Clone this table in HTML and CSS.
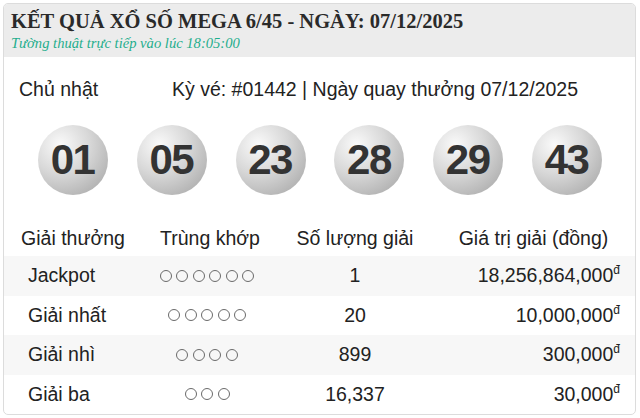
FILE: index.html
```html
<!DOCTYPE html>
<html lang="vi">
<head>
<meta charset="utf-8">
<link rel="stylesheet" href="styles.css">
</head>
<body>
<div class="card">
  <div class="head">
    <h1 class="title">KẾT QUẢ XỔ SỐ MEGA 6/45 - NGÀY: 07/12/2025</h1>
    <div class="live">Tường thuật trực tiếp vào lúc 18:05:00</div>
  </div>
  <div class="info">
    <span class="day">Chủ nhật</span>
    <span class="draw">Kỳ vé: #01442 | Ngày quay thưởng 07/12/2025</span>
  </div>
  <div class="balls">
    <span class="ball">01</span>
    <span class="ball">05</span>
    <span class="ball">23</span>
    <span class="ball">28</span>
    <span class="ball">29</span>
    <span class="ball">43</span>
  </div>
  <div class="prizes">
    <div class="row th">
      <div class="c1">Giải thưởng</div>
      <div class="c2">Trùng khớp</div>
      <div class="c3">Số lượng giải</div>
      <div class="c4">Giá trị giải (đồng)</div>
    </div>
    <div class="row alt">
      <div class="c1 name">Jackpot</div>
      <div class="c2 dots"><i></i><i></i><i></i><i></i><i></i><i></i></div>
      <div class="c3">1</div>
      <div class="c4 val">18,256,864,000<sup>đ</sup></div>
    </div>
    <div class="row">
      <div class="c1 name">Giải nhất</div>
      <div class="c2 dots"><i></i><i></i><i></i><i></i><i></i></div>
      <div class="c3">20</div>
      <div class="c4 val">10,000,000<sup>đ</sup></div>
    </div>
    <div class="row alt">
      <div class="c1 name">Giải nhì</div>
      <div class="c2 dots"><i></i><i></i><i></i><i></i></div>
      <div class="c3">899</div>
      <div class="c4 val">300,000<sup>đ</sup></div>
    </div>
    <div class="row">
      <div class="c1 name">Giải ba</div>
      <div class="c2 dots"><i></i><i></i><i></i></div>
      <div class="c3">16,337</div>
      <div class="c4 val">30,000<sup>đ</sup></div>
    </div>
  </div>
</div>
</body>
</html>
```
FILE: styles.css
```css
html, body {
  margin: 0;
  padding: 0;
  background: #fff;
}
body {
  padding: 3px 4px 0 3px;
  font-family: "Liberation Sans", Arial, sans-serif;
  color: #222;
}
.card {
  border: 1px solid #dcdcdc;
  border-radius: 5px;
  overflow: hidden;
  height: 412px;
  box-sizing: border-box;
}
.head {
  background: #ececec;
  height: 53px;
  padding: 6px 7px 0;
  box-sizing: border-box;
}
.title {
  margin: 0;
  font-family: "Liberation Serif", "Times New Roman", serif;
  font-weight: bold;
  font-size: 20.5px;
  line-height: 22px;
  color: #2a2a2a;
}
.live {
  font-family: "Liberation Serif", "Times New Roman", serif;
  font-style: italic;
  font-size: 14.6px;
  line-height: 18px;
  color: #1fae8c;
  margin-top: 2px;
}
.info {
  display: flex;
  align-items: center;
  height: 60px;
  padding: 4px 0 0 15px;
  box-sizing: border-box;
  font-size: 19.5px;
}
.day {
  width: 153px;
}
.balls {
  display: flex;
  justify-content: space-between;
  padding: 8px 33px 0 34px;
  height: 109px;
  box-sizing: border-box;
}
.ball {
  width: 70px;
  height: 70px;
  border-radius: 50%;
  background: radial-gradient(circle at 32% 28%, #fafafa 0%, #d8d8d8 42%, #a0a0a0 100%);
  display: flex;
  align-items: center;
  justify-content: center;
  font-weight: bold;
  font-size: 42px;
  color: #333;
  letter-spacing: -1.5px;
  padding-right: 1px;
  box-sizing: border-box;
}
.prizes {
  font-size: 19.5px;
}
.row {
  display: grid;
  grid-template-columns: 138px 136px 154px 1fr;
  height: 39.5px;
  align-items: center;
}
.th {
  height: 30px;
  align-items: start;
  padding-top: 1px;
  box-sizing: border-box;
}
.alt {
  background: #f7f7f7;
}
.c1, .c2, .c3, .c4 {
  text-align: center;
}
.c1.name {
  text-align: left;
  padding-left: 24px;
}
.dots {
  display: flex;
  justify-content: center;
  gap: 4.5px;
  padding-right: 6px;
}
.dots i {
  width: 12px;
  height: 12px;
  border: 1.3px solid #6a6a6a;
  border-radius: 50%;
  box-sizing: border-box;
}
.val {
  text-align: right;
  padding-right: 15px;
}
.val sup {
  font-size: 12px;
  line-height: 0;
  vertical-align: 8px;
}
```
